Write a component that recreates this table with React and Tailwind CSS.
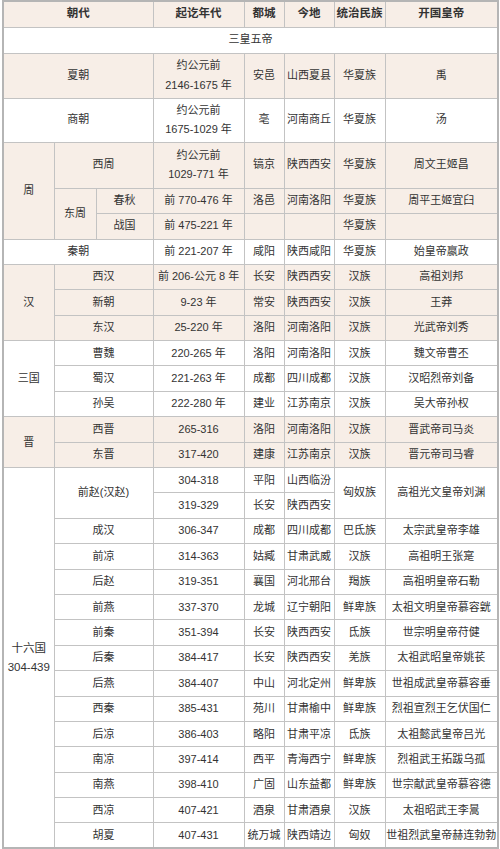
import React from 'react';

const beige = 'bg-[#f7eee7]';

const Td = ({ children, className = '', ...rest }) => (
  <td
    {...rest}
    className={`border-[1.5px] border-[#c3c3c3] text-center align-middle p-0 leading-[1.2] whitespace-nowrap ${className}`}
  >
    {children}
  </td>
);

const han = [
  ['西汉', '前 206-公元 8 年', '长安', '陕西西安', '汉族', '高祖刘邦'],
  ['新朝', '9-23 年', '常安', '陕西西安', '汉族', '王莽'],
  ['东汉', '25-220 年', '洛阳', '河南洛阳', '汉族', '光武帝刘秀'],
];

const sanguo = [
  ['曹魏', '220-265 年', '洛阳', '河南洛阳', '汉族', '魏文帝曹丕'],
  ['蜀汉', '221-263 年', '成都', '四川成都', '汉族', '汉昭烈帝刘备'],
  ['孙吴', '222-280 年', '建业', '江苏南京', '汉族', '吴大帝孙权'],
];

const jin = [
  ['西晋', '265-316', '洛阳', '河南洛阳', '汉族', '晋武帝司马炎'],
  ['东晋', '317-420', '建康', '江苏南京', '汉族', '晋元帝司马睿'],
];

const sixteen = [
  ['成汉', '306-347', '成都', '四川成都', '巴氐族', '太宗武皇帝李雄'],
  ['前凉', '314-363', '姑臧', '甘肃武威', '汉族', '高祖明王张寔'],
  ['后赵', '319-351', '襄国', '河北邢台', '羯族', '高祖明皇帝石勒'],
  ['前燕', '337-370', '龙城', '辽宁朝阳', '鲜卑族', '太祖文明皇帝慕容皝'],
  ['前秦', '351-394', '长安', '陕西西安', '氐族', '世宗明皇帝苻健'],
  ['后秦', '384-417', '长安', '陕西西安', '羌族', '太祖武昭皇帝姚苌'],
  ['后燕', '384-407', '中山', '河北定州', '鲜卑族', '世祖成武皇帝慕容垂'],
  ['西秦', '385-431', '苑川', '甘肃榆中', '鲜卑族', '烈祖宣烈王乞伏国仁'],
  ['后凉', '386-403', '略阳', '甘肃平凉', '氐族', '太祖懿武皇帝吕光'],
  ['南凉', '397-414', '西平', '青海西宁', '鲜卑族', '烈祖武王拓跋乌孤'],
  ['南燕', '398-410', '广固', '山东益都', '鲜卑族', '世宗献武皇帝慕容德'],
  ['西凉', '407-421', '酒泉', '甘肃酒泉', '汉族', '太祖昭武王李暠'],
  ['胡夏', '407-431', '统万城', '陕西靖边', '匈奴', '世祖烈武皇帝赫连勃勃'],
];

const Cells = ({ row, bg = '' }) =>
  row.slice(1).map((c, i) => (
    <Td key={i} className={bg}>
      {c}
    </Td>
  ));

const App = () => {
  return (
    <div
      className="bg-white w-[500px] min-h-[849px] text-[#333] text-[11px]"
      style={{ fontFamily: '"Liberation Sans", "Noto Sans CJK SC", sans-serif' }}
    >
      <table className="ml-[2px] w-[495px] table-fixed border-collapse border-[2px] border-[#b5b5b5]">
        <colgroup>
          <col className="w-[51px]" />
          <col className="w-[42px]" />
          <col className="w-[57px]" />
          <col className="w-[91px]" />
          <col className="w-[40px]" />
          <col className="w-[50px]" />
          <col className="w-[51px]" />
          <col className="w-[113px]" />
        </colgroup>
        <tbody>
          <tr className="h-[26px] font-bold text-[11.5px]">
            <Td colSpan={3} className={beige}>朝代</Td>
            <Td className={beige}>起讫年代</Td>
            <Td className={beige}>都城</Td>
            <Td className={beige}>今地</Td>
            <Td className={beige}>统治民族</Td>
            <Td className={beige}>开国皇帝</Td>
          </tr>
          <tr className="h-[26px]">
            <Td colSpan={8}>三皇五帝</Td>
          </tr>
          <tr className="h-[45px]">
            <Td colSpan={3} className={beige}>夏朝</Td>
            <Td className={`${beige} leading-[1.75]`}>约公元前<br />2146-1675 年</Td>
            <Td className={beige}>安邑</Td>
            <Td className={beige}>山西夏县</Td>
            <Td className={beige}>华夏族</Td>
            <Td className={beige}>禹</Td>
          </tr>
          <tr className="h-[44px]">
            <Td colSpan={3}>商朝</Td>
            <Td className="leading-[1.75]">约公元前<br />1675-1029 年</Td>
            <Td>亳</Td>
            <Td>河南商丘</Td>
            <Td>华夏族</Td>
            <Td>汤</Td>
          </tr>
          <tr className="h-[46px]">
            <Td rowSpan={3} className={beige}>周</Td>
            <Td colSpan={2} className={beige}>西周</Td>
            <Td className={`${beige} leading-[1.75]`}>约公元前<br />1029-771 年</Td>
            <Td className={beige}>镐京</Td>
            <Td className={beige}>陕西西安</Td>
            <Td className={beige}>华夏族</Td>
            <Td className={beige}>周文王姬昌</Td>
          </tr>
          <tr className="h-[25px]">
            <Td rowSpan={2} className={beige}>东周</Td>
            <Td className={beige}>春秋</Td>
            <Td className={beige}>前 770-476 年</Td>
            <Td className={beige}>洛邑</Td>
            <Td className={beige}>河南洛阳</Td>
            <Td className={beige}>华夏族</Td>
            <Td className={beige}>周平王姬宜臼</Td>
          </tr>
          <tr className="h-[26px]">
            <Td className={beige}>战国</Td>
            <Td className={beige}>前 475-221 年</Td>
            <Td className={beige}></Td>
            <Td className={beige}></Td>
            <Td className={beige}>华夏族</Td>
            <Td className={beige}></Td>
          </tr>
          <tr className="h-[25.4px]">
            <Td colSpan={3}>秦朝</Td>
            <Td>前 221-207 年</Td>
            <Td>咸阳</Td>
            <Td>陕西咸阳</Td>
            <Td>华夏族</Td>
            <Td>始皇帝嬴政</Td>
          </tr>
          {han.map((r, i) => (
            <tr key={r[0]} className="h-[25.4px]">
              {i === 0 && <Td rowSpan={3} className={beige}>汉</Td>}
              <Td colSpan={2} className={beige}>{r[0]}</Td>
              <Cells row={r} bg={beige} />
            </tr>
          ))}
          {sanguo.map((r, i) => (
            <tr key={r[0]} className="h-[25.4px]">
              {i === 0 && <Td rowSpan={3}>三国</Td>}
              <Td colSpan={2}>{r[0]}</Td>
              <Cells row={r} />
            </tr>
          ))}
          {jin.map((r, i) => (
            <tr key={r[0]} className="h-[25.4px]">
              {i === 0 && <Td rowSpan={2} className={beige}>晋</Td>}
              <Td colSpan={2} className={beige}>{r[0]}</Td>
              <Cells row={r} bg={beige} />
            </tr>
          ))}
          <tr className="h-[25.4px]">
            <Td rowSpan={15} className="leading-[1.6] text-[11.5px]">十六国<br />304-439</Td>
            <Td colSpan={2} rowSpan={2}>前赵(汉赵)</Td>
            <Td>304-318</Td>
            <Td>平阳</Td>
            <Td>山西临汾</Td>
            <Td rowSpan={2}>匈奴族</Td>
            <Td rowSpan={2}>高祖光文皇帝刘渊</Td>
          </tr>
          <tr className="h-[25.4px]">
            <Td>319-329</Td>
            <Td>长安</Td>
            <Td>陕西西安</Td>
          </tr>
          {sixteen.map((r) => (
            <tr key={r[0]} className="h-[25.4px]">
              <Td colSpan={2}>{r[0]}</Td>
              <Cells row={r} />
            </tr>
          ))}
        </tbody>
      </table>
    </div>
  );
};

export default App;
